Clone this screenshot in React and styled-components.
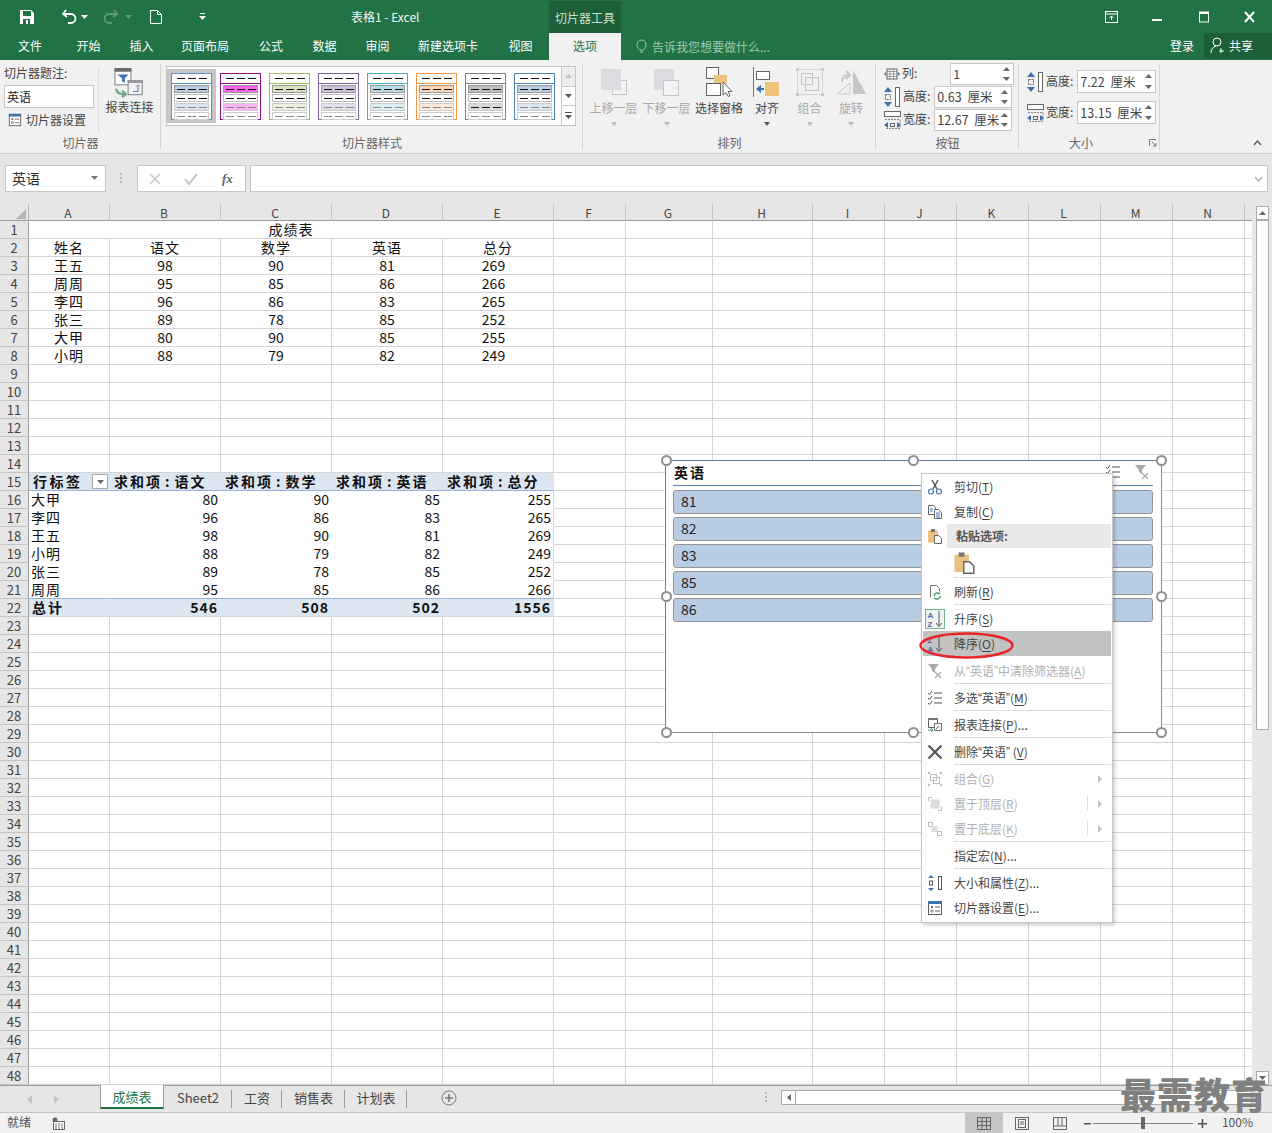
import React from "react";
import styled, { createGlobalStyle } from "styled-components";

const GlobalStyle = createGlobalStyle`
  html, body { margin: 0; padding: 0; background: #fff; }
  * { box-sizing: border-box; }
  body { font-family: "Noto Sans CJK SC", "Liberation Sans", sans-serif; font-size: 12px; color: #444; }
`;

const Page = styled.div`
  position: relative;
  width: 1272px;
  height: 1133px;
  overflow: hidden;
  display: flex;
  flex-direction: column;
  background: #e6e6e6;
`;

/* title + tabs */
const TitleBar = styled.div`
  height: 33px;
  background: #217346;
  display: flex;
  align-items: center;
  color: #fff;
`;
const Qat = styled.div`
  width: 351px;
  height: 100%;
  position: relative;
  display: flex;
  align-items: center;
`;
const QatIcon = styled.span`
  display: inline-flex;
  justify-content: center;
  flex: 0 0 ${(p) => p.$w}px;
  margin-left: ${(p) => p.$ml || 0}px;
`;
const TitleText = styled.div`
  width: 198px;
  font-size: 12px;
  line-height: 16px;
  color: #f2f7f4;
`;
const ToolLabel = styled.div`
  width: 72px;
  height: 33px;
  margin-top: 1px;
  background: #1d5f39;
  color: #c9e0d2;
  display: flex;
  align-items: center;
  justify-content: center;
  font-size: 12px;
`;
const WinButtons = styled.div`
  margin-left: auto;
  display: flex;
  width: 185px;
  margin-right: -1px;
  justify-content: space-between;
`;
const WinButton = styled.span`
  width: 46px;
  display: inline-flex;
  justify-content: center;
`;
const TabBar = styled.div`
  height: 27px;
  background: #217346;
  display: flex;
  align-items: stretch;
  color: #fff;
`;
const Tab = styled.div`
  flex: 0 0 ${(p) => p.$w}px;
  display: flex;
  align-items: center;
  justify-content: center;
  font-size: 12px;
  padding-bottom: 2px;
  background: ${(p) => (p.$active ? "#f1f1f1" : "transparent")};
  color: ${(p) => (p.$active ? "#217346" : "#fff")};
`;
const TellMe = styled.div`
  margin-left: 15px;
  display: flex;
  align-items: center;
  gap: 5px;
  color: #9fcab2;
  font-size: 12px;
  padding-bottom: 1px;
`;
const SignIn = styled.div`
  margin-left: auto;
  width: 44px;
  display: flex;
  align-items: center;
  justify-content: center;
  padding-bottom: 2px;
`;
const Share = styled.div`
  width: 68px;
  margin: 0 0 1px;
  background: #1d5f39;
  display: flex;
  align-items: center;
  gap: 3px;
  padding: 0 0 1px 6px;
`;

/* ribbon */
const Ribbon = styled.div`
  height: 94px;
  background: #f1f1f1;
  border-bottom: 1px solid #d2d2d2;
  display: flex;
  position: relative;
`;
const Group = styled.div`
  flex: 0 0 ${(p) => p.$w}px;
  position: relative;
  display: flex;
  flex-direction: column;
  padding-top: 3px;
  &::after {
    content: "";
    position: absolute;
    right: 0;
    top: 4px;
    bottom: 4px;
    width: 1px;
    background: #d4d4d4;
  }
`;
const GroupBody = styled.div`
  flex: 1;
  display: flex;
  min-height: 0;
`;
const Caption = styled.div`
  height: 18px;
  flex: none;
  text-align: center;
  line-height: 16px;
  color: #666;
  font-size: 12px;
  padding-right: ${(p) => p.$pr || 0}px;
`;
const SliceCol = styled.div`
  width: 98px;
  padding: 2px 0 0 4px;
  display: flex;
  flex-direction: column;
`;
const SmallLabel = styled.div`
  font-size: 12px;
  line-height: 16px;
  color: #444;
  white-space: nowrap;
`;
const CaptionInput = styled.div`
  width: 90px;
  height: 23px;
  margin-top: 4px;
  background: #fff;
  border: 1px solid #c6c6c6;
  font-size: 12px;
  line-height: 21px;
  color: #222;
  padding-left: 2px;
`;
const IconLabel = styled.div`
  display: flex;
  align-items: center;
  gap: 4px;
  margin: 3px 0 0 4px;
  white-space: nowrap;
`;
const ReportButton = styled.div`
  padding: 1px 0 0 0;
  width: 62px;
  display: flex;
  flex-direction: column;
  align-items: center;
  white-space: nowrap;
  border-left: 1px solid #dcdcdc;
  height: 66px;
  margin-top: 4px;
`;
const ReportText = styled.div`
  line-height: 18px;
`;
const Gallery = styled.div`
  margin: 3px 0 0 5px;
  width: 410px;
  height: 60px;
  border: 1px solid #c6c6c6;
  background: #fff;
  display: flex;
  position: relative;
`;
const ThumbCell = styled.div`
  flex: 0 0 49px;
  height: 54px;
  margin-top: 2px;
  padding: 4px 4px;
  background: ${(p) => (p.$selected ? "#c6c6c6" : "transparent")};
`;
const Thumb = styled.div`
  width: 41px;
  height: 47px;
  border: 1px solid ${(p) => p.$c};
  background: #fff;
`;
const ThumbHead = styled.div`
  height: 10px;
  border-bottom: 1px solid ${(p) => p.$c};
  display: flex;
  align-items: center;
  justify-content: center;
`;
const ThumbRow = styled.div`
  height: 8px;
  margin: 1px 2px 0;
  border: 1px solid ${(p) => p.$b || "#bbb"};
  background: ${(p) => p.$bg || "#fff"};
  display: flex;
  align-items: center;
  justify-content: center;
`;
const Dashes = styled.div`
  width: 30px;
  height: 1px;
  background: repeating-linear-gradient(90deg, ${(p) => p.$c} 0 8px, transparent 8px 11px);
`;
const GalleryScroll = styled.div`
  position: absolute;
  right: 0;
  top: 0;
  bottom: 0;
  width: 14px;
  border-left: 1px solid #c6c6c6;
  display: flex;
  flex-direction: column;
`;
const GalleryBtn = styled.div`
  flex: 1;
  display: flex;
  align-items: center;
  justify-content: center;
  background: ${(p) => (p.$off ? "#eee" : "#fff")};
  border-bottom: ${(p) => (p.$last ? "0" : "1px solid #c6c6c6")};
`;
const ArrangeRow = styled.div`
  display: flex;
  padding-left: 4px;
`;
const ArrangeButton = styled.div`
  flex: 0 0 ${(p) => p.$w}px;
  display: flex;
  flex-direction: column;
  align-items: center;
  padding-top: 3px;
  color: ${(p) => (p.$off ? "#a9a9a9" : "#444")};
  white-space: nowrap;
`;
const ArrangeIcon = styled.div`
  height: 32px;
  display: flex;
  align-items: center;
  justify-content: center;
`;
const ArrangeText = styled.div`
  line-height: 16px;
  margin-top: 2px;
`;
const Caret = styled.div`
  margin-top: 6px;
  width: 0;
  height: 0;
  border-left: 3px solid transparent;
  border-right: 3px solid transparent;
  border-top: 4px solid ${(p) => (p.$off ? "#bdbdbd" : "#555")};
`;
const FieldStack = styled.div`
  display: flex;
  flex-direction: column;
  gap: ${(p) => p.$gap}px;
  padding: ${(p) => p.$pt}px 0 0 ${(p) => p.$pl}px;
`;
const FieldRow = styled.div`
  display: flex;
  align-items: center;
  height: ${(p) => p.$h || 22}px;
  gap: 2px;
`;
const FieldLabel = styled.span`
  color: #444;
  font-size: 12px;
  line-height: 16px;
  margin-top: -2px;
  white-space: nowrap;
`;
const Spin = styled.div`
  width: ${(p) => p.$w}px;
  height: ${(p) => p.$h || 22}px;
  margin-left: ${(p) => p.$ml || 0}px;
  border: 1px solid #c6c6c6;
  background: #fff;
  display: flex;
  align-items: center;
  padding: 0 0 1px 2px;
  color: #444;
  font-size: 12.5px;
  word-spacing: 3px;
  position: relative;
  white-space: nowrap;
`;
const SpinArrows = styled.div`
  position: absolute;
  right: 3px;
  top: 3px;
  bottom: 3px;
  display: flex;
  flex-direction: column;
  justify-content: space-between;
`;
const Launcher = styled.div`
  position: absolute;
  right: 3px;
  bottom: 3px;
`;
const Collapse = styled.div`
  position: absolute;
  left: 1253px;
  bottom: 4px;
`;

/* formula bar */
const FormulaBar = styled.div`
  height: 50px;
  padding: 11px 4px 0 5px;
  display: flex;
  background: #e6e6e6;
`;
const NameBox = styled.div`
  width: 101px;
  height: 27px;
  background: #fff;
  border: 1px solid #c6c6c6;
  display: flex;
  align-items: center;
  justify-content: space-between;
  padding: 0 7px 2px 6px;
  font-size: 14px;
  color: #333;
`;
const Dots = styled.div`
  width: 31px;
  display: flex;
  align-items: center;
  justify-content: center;
  height: 27px;
`;
const FxBox = styled.div`
  width: 109px;
  height: 27px;
  background: #fff;
  border: 1px solid #c6c6c6;
  display: flex;
  align-items: center;
  padding-left: 11px;
  gap: 23px;
  margin-right: 4px;
`;
const FxLabel = styled.span`
  font-family: "Liberation Serif", serif;
  font-style: italic;
  font-weight: 700;
  font-size: 13px;
  color: #666;
`;
const FormulaInput = styled.div`
  flex: 1;
  height: 27px;
  background: #fff;
  border: 1px solid #c6c6c6;
  display: flex;
  align-items: center;
  justify-content: flex-end;
  padding-right: 4px;
`;

/* sheet */
const SheetWrap = styled.div`
  height: 881px;
  display: flex;
  background: #fff;
`;
const Sheet = styled.div`
  width: 1252px;
  display: flex;
  flex-direction: column;
`;
const ColHeaderRow = styled.div`
  display: grid;
  grid-template-columns: 29px 81px 111px 111px 111px 111px 72px 87px 100px 72px 72px 72px 72px 72px 72px 7px;
  height: 17px;
  background: #e6e6e6;
  border-bottom: 1px solid #9b9b9b;
  flex: none;
`;
const Corner = styled.div`
  border-right: 1px solid #b5b5b5;
  position: relative;
  &::after {
    content: "";
    position: absolute;
    right: 2px;
    bottom: 2px;
    border-left: 10px solid transparent;
    border-bottom: 10px solid #b6b6b6;
  }
`;
const ColHead = styled.div`
  border-right: 1px solid #c4c4c4;
  padding-right: 2px;
  text-align: center;
  font-size: 12px;
  line-height: 17px;
  color: #444;
`;
const GridRow = styled.div`
  display: grid;
  grid-template-columns: 29px 81px 111px 111px 111px 111px 72px 87px 100px 72px 72px 72px 72px 72px 72px 7px;
  grid-template-rows: 18px;
  height: 18px;
  flex: none;
`;
const RowHead = styled.div`
  height: 18px;
  background: #e6e6e6;
  border-right: 1px solid #9b9b9b;
  border-bottom: 1px solid #c4c4c4;
  text-align: center;
  font-size: 13px;
  line-height: 18px;
  color: #444;
`;
const Cell = styled.div`
  height: 18px;
  grid-column: span ${(p) => p.$span || 1};
  border-right: 1px solid ${(p) => (p.$noRight ? "transparent" : "#d4d4d4")};
  border-bottom: 1px solid ${(p) => p.$bottom || "#d4d4d4"};
  background: ${(p) => p.$fill || "#fff"};
  text-align: ${(p) => p.$align || "center"};
  padding: ${(p) => p.$pad || "0"};
  font-size: 14px;
  line-height: 17px;
  letter-spacing: ${(p) => p.$ls || 0}px;
  font-weight: ${(p) => (p.$bold ? 700 : 400)};
  color: #111;
  white-space: nowrap;
  position: relative;
`;
const Colon = styled.span`
  margin: 0 3px;
`;
const FilterBtn = styled.div`
  position: absolute;
  right: 1px;
  top: 1px;
  width: 16px;
  height: 15px;
  background: #fff;
  border: 1px solid #aaa;
  display: flex;
  align-items: center;
  justify-content: center;
`;
const ScrollBar = styled.div`
  width: 20px;
  background: #e6e6e6;
  padding: 2px 3px 0 4px;
  display: flex;
  flex-direction: column;
`;
const ScrollBtn = styled.div`
  height: 14px;
  background: #fff;
  border: 1px solid #aaa;
  display: flex;
  align-items: center;
  justify-content: center;
  flex: none;
  margin-top: ${(p) => (p.$end ? "auto" : "0")};
`;
const ScrollThumb = styled.div`
  height: 510px;
  background: #fff;
  border: 1px solid #aaa;
  flex: none;
`;

/* tabs */
const SheetTabs = styled.div`
  height: 27px;
  border-top: 1px solid #9b9b9b;
  background: #e6e6e6;
  display: flex;
  align-items: stretch;
  position: relative;
`;
const TabNav = styled.div`
  width: 100px;
  display: flex;
  align-items: center;
  gap: 21px;
  padding-left: 27px;
  flex: none;
`;
const SheetTab = styled.div`
  flex: 0 0 ${(p) => p.$w}px;
  display: flex;
  align-items: center;
  justify-content: center;
  font-size: 13px;
  color: #444;
  margin-bottom: 4px;
  position: relative;
  ${(p) =>
    p.$active
      ? `background:#fff;color:#217346;border:1px solid #9b9b9b;border-top:0;border-bottom:2px solid #217346;margin-bottom:3px;margin-top:-1px;`
      : ""}
  ${(p) =>
    p.$sep
      ? `&::after{content:"";position:absolute;right:0;top:4px;bottom:0;width:1px;background:#9b9b9b;}`
      : ""}
`;
const AddSheet = styled.div`
  margin-left: 34px;
  display: flex;
  align-items: center;
  padding-bottom: 3px;
`;
const HScrollArea = styled.div`
  margin-left: auto;
  display: flex;
  align-items: center;
  width: 507px;
  padding-bottom: 3px;
`;
const HScrollBtn = styled.div`
  width: 15px;
  height: 15px;
  background: #fff;
  border: 1px solid #aaa;
  display: flex;
  align-items: center;
  justify-content: center;
  margin-left: 13px;
`;
const HScrollTrack = styled.div`
  flex: 1;
  height: 15px;
  background: #fff;
  border: 1px solid #aaa;
  border-left: 0;
  margin-right: 20px;
`;

/* status */
const StatusBar = styled.div`
  height: 21px;
  background: #f1f1f1;
  border-top: 1px solid #c6c6c6;
  display: flex;
  align-items: center;
  padding-left: 7px;
  color: #555;
  font-size: 12px;
`;
const StatusText = styled.span`
  line-height: 16px;
  margin: -3px ${(p) => p.$mr || 0}px 0 ${(p) => p.$ml || 0}px;
`;
const ViewBtn = styled.div`
  width: 38px;
  height: 20px;
  display: flex;
  align-items: center;
  justify-content: center;
  background: ${(p) => (p.$active ? "#c6c6c6" : "transparent")};
`;
const StatusRight = styled.div`
  margin-left: auto;
  display: flex;
  align-items: center;
  height: 100%;
  padding-right: 19px;
`;
const ZoomOut = styled.span`
  display: inline-flex;
  margin-left: 5px;
`;
const Slider = styled.div`
  width: 100px;
  height: 1px;
  background: #888;
  margin: 0 5px 0 2px;
  position: relative;
`;
const SliderThumb = styled.div`
  position: absolute;
  left: 48px;
  top: -6px;
  width: 4px;
  height: 12px;
  background: #666;
`;

/* slicer overlay */
const Slicer = styled.div`
  position: absolute;
  left: 665px;
  top: 460px;
  width: 497px;
  height: 273px;
  background: #fff;
  border: 1px solid #8d8d8d;
  border-top-color: #5f7fa6;
  border-left-color: #5f7fa6;
  padding: 0 8px 0 7px;
`;
const SlicerTitle = styled.div`
  height: 25px;
  border-bottom: 1px solid #5f86b3;
  font-size: 14px;
  font-weight: 700;
  line-height: 22px;
  letter-spacing: 2px;
  padding-left: 1px;
  color: #111;
  margin-bottom: 4px;
`;
const SlicerTools = styled.div`
  position: absolute;
  right: 11px;
  top: 3px;
  display: flex;
  gap: 13px;
`;
const SlicerItem = styled.div`
  height: 24px;
  margin-bottom: 3px;
  background: #b8cce4;
  border: 1px solid #959595;
  border-radius: 3px;
  padding-left: 7px;
  font-size: 14px;
  line-height: 21px;
  color: #222;
`;
const Handle = styled.div`
  position: absolute;
  left: ${(p) => p.$x - 5}px;
  top: ${(p) => p.$y - 5}px;
  width: 11px;
  height: 11px;
  border-radius: 50%;
  background: #fff;
  border: 2px solid #8f8f8f;
`;

/* context menu */
const Menu = styled.div`
  position: absolute;
  left: 921px;
  top: 473px;
  width: 192px;
  height: 450px;
  background: #fff;
  border: 1px solid #c6c6c6;
  box-shadow: 2px 2px 4px rgba(0, 0, 0, 0.2);
  padding: 0 1px;
`;
const MenuItem = styled.div`
  height: 25px;
  display: flex;
  align-items: center;
  background: ${(p) => (p.$active ? "#c2c2c2" : "transparent")};
  color: ${(p) => (p.$off ? "#b1b1b1" : "#444")};
  font-size: 12px;
  white-space: nowrap;
  position: relative;
  u { text-underline-offset: 2px; }
`;
const MenuIcon = styled.span`
  flex: 0 0 24px;
  display: inline-flex;
  justify-content: center;
  align-items: center;
  margin-right: ${(p) => (p.$flush ? 0 : 7)}px;
`;
const Quote = styled.span`
  font-family: "Liberation Sans", sans-serif;
`;
const MenuDivider = styled.div`
  height: 2px;
  margin-left: 31px;
  border-top: ${(p) => (p.$blank ? "0" : "1px solid #dcdcdc")};
`;
const MenuHeadBar = styled.div`
  flex: 1;
  height: 24px;
  background: #e9e9e9;
  font-weight: 700;
  line-height: 23px;
  padding-left: 9px;
  color: #555;
`;
const MenuHead = styled.div`
  height: 24px;
  display: flex;
  align-items: center;
  font-size: 12px;
`;
const PasteRow = styled.div`
  height: 29px;
  padding-left: 30px;
  display: flex;
  align-items: center;
`;
const SubArrow = styled.span`
  position: absolute;
  right: 9px;
  width: 0;
  height: 0;
  border-top: 4px solid transparent;
  border-bottom: 4px solid transparent;
  border-left: 4px solid #c2c2c2;
`;
const SubSep = styled.span`
  position: absolute;
  right: 23px;
  top: 5px;
  bottom: 6px;
  width: 1px;
  background: #dedede;
`;
const RedRing = styled.svg`
  position: absolute;
  left: 918px;
  top: 632px;
  pointer-events: none;
`;
const Watermark = styled.div`
  position: absolute;
  left: 1120px;
  top: 1075px;
  font-size: 36px;
  font-weight: 900;
  line-height: 37px;
  color: #808080;
  white-space: nowrap;
  letter-spacing: 1px;
`;

const Ico = ({ w = 16, h = 16, children, vb }) => (
  <svg width={w} height={h} viewBox={vb || `0 0 ${w} ${h}`} fill="none">
    {children}
  </svg>
);

const UpTri = ({ c = "#666" }) => <Ico w={7} h={4}><path d="M3.5 0L7 4H0z" fill={c} /></Ico>;
const DownTri = ({ c = "#666" }) => <Ico w={7} h={4}><path d="M0 0h7L3.5 4z" fill={c} /></Ico>;

const SliceSettings = ({ size = 16 }) => (
  <Ico w={size} h={size} vb="0 0 16 16">
    <rect x="1.5" y="1.5" width="13" height="13" fill="#fff" stroke="#5a5a5a" />
    <rect x="1" y="1" width="14" height="3" fill="#3f73ad" />
    <rect x="4" y="6" width="2" height="2" fill="#666" />
    <rect x="4" y="10" width="2" height="2" stroke="#666" strokeWidth=".7" />
    <path d="M8 7h5M8 11h5" stroke="#666" />
  </Ico>
);

const ResizeV = () => (
  <Ico w={17} h={22}>
    <path d="M4 1L0 6h8zM4 21l-4-5h8z" fill="#3f73ad" />
    <rect x="1.5" y="8.5" width="5" height="5" stroke="#666" strokeDasharray="2 1" />
    <rect x="11.5" y="1.5" width="4" height="19" stroke="#666" fill="#fff" />
  </Ico>
);
const ResizeH = () => (
  <Ico w={17} h={20}>
    <rect x=".5" y="1.5" width="16" height="5" fill="#fff" stroke="#666" />
    <path d="M1 9.5h15v9H1" stroke="#888" strokeDasharray="2 1" />
    <path d="M0 15l4-3v6zM17 15l-4-3v6z" fill="#3f73ad" />
    <rect x="6.5" y="13.5" width="4" height="3" stroke="#666" />
  </Ico>
);
const TableIcon = () => (
  <Ico w={16} h={12}>
    <path d="M0 6l2-2v4zM16 6l-2-2v4z" fill="#3f73ad" />
    <rect x="3" y="1" width="10" height="10" fill="#fff" stroke="#666" />
    <path d="M3 3.5h10M3 6h10M3 8.5h10M6 1v10M9.500 1v10" stroke="#777" strokeWidth=".7" />
  </Ico>
);

const themes = [
  ["#5b8fc9", "#b8cce4", "#dbe3ee"],
  ["#8b0f8b", "#ff66f0", "#ffb3f5"],
  ["#9bbb59", "#d8e4bc", "#ebf1de"],
  ["#8064a2", "#ccc0da", "#e4dfec"],
  ["#4bacc6", "#b7dee8", "#daeef3"],
  ["#f79646", "#fcd5b4", "#fde9d9"],
  ["#7f7f7f", "#bfbfbf", "#d9d9d9", "#111"],
  ["#4f81bd", "#b8cce4", "#dce6f1"],
];

function StyleThumb({ theme, selected }) {
  const [c, on, dim, dimDash] = theme;
  return (
    <ThumbCell $selected={selected}>
      <Thumb $c={c}>
        <ThumbHead $c={c}><Dashes $c="#111" /></ThumbHead>
        <ThumbRow $bg={on} $b="#999"><Dashes $c="#111" /></ThumbRow>
        <ThumbRow><Dashes $c="#111" /></ThumbRow>
        <ThumbRow $bg={dim} $b="#ccc"><Dashes $c={dimDash || "#888"} /></ThumbRow>
        <ThumbRow $b="#ccc"><Dashes $c="#888" /></ThumbRow>
      </Thumb>
    </ThumbCell>
  );
}

function SpinBox({ w, h, ml, children }) {
  return (
    <Spin $w={w} $h={h} $ml={ml}>
      {children}
      <SpinArrows><UpTri /><DownTri /></SpinArrows>
    </Spin>
  );
}

const tabs = [
  ["文件", 60], ["开始", 57], ["插入", 49], ["页面布局", 78], ["公式", 54],
  ["数据", 53], ["审阅", 53], ["新建选项卡", 88], ["视图", 57],
];

const colNames = "ABCDEFGHIJKLMN".split("");

const scores = [
  ["姓名", "语文", "数学", "英语", "总分"],
  ["王五", "98", "90", "81", "269"],
  ["周周", "95", "85", "86", "266"],
  ["李四", "96", "86", "83", "265"],
  ["张三", "89", "78", "85", "252"],
  ["大甲", "80", "90", "85", "255"],
  ["小明", "88", "79", "82", "249"],
];
const pivot = [
  ["大甲", "80", "90", "85", "255"],
  ["李四", "96", "86", "83", "265"],
  ["王五", "98", "90", "81", "269"],
  ["小明", "88", "79", "82", "249"],
  ["张三", "89", "78", "85", "252"],
  ["周周", "95", "85", "86", "266"],
];

const PIVOT_FILL = "#dce6f1";
const PIVOT_LINE = "#95b3d7";

function restCells(from) {
  const out = [];
  for (let i = from; i < 15; i++) out.push(<Cell key={i} $noRight={i === 14} />);
  return out;
}

function renderCells(n) {
  if (n === 1) {
    return [<Cell key="t" $span={5} $ls={1}>成绩表</Cell>, ...restCells(5)];
  }
  if (n >= 2 && n <= 8) {
    const row = scores[n - 2];
    return [
      ...row.map((v, i) => (
        <Cell
          key={i}
          $ls={i === 0 || n === 2 ? 1 : 0}
          $pad={i === 4 && n > 2 ? "0 9px 0 0" : "0"}
        >
          {v}
        </Cell>
      )),
      ...restCells(5),
    ];
  }
  if (n === 15) {
    return [
      <Cell key="a" $fill={PIVOT_FILL} $bottom={PIVOT_LINE} $bold $ls={2.5} $align="left" $pad="0 0 0 4px" $noRight>
        行标签
        <FilterBtn><DownTri /></FilterBtn>
      </Cell>,
      ...["语文", "数学", "英语", "总分"].map((s) => (
        <Cell key={s} $fill={PIVOT_FILL} $bottom={PIVOT_LINE} $bold $ls={2} $align="left" $pad="0 0 0 4px" $noRight>
          求和项<Colon>:</Colon>{s}
        </Cell>
      )),
      ...restCells(5),
    ];
  }
  if (n >= 16 && n <= 21) {
    const row = pivot[n - 16];
    return [
      ...row.map((v, i) => (
        <Cell
          key={i}
          $noRight={i < 4}
          $align={i === 0 ? "left" : "right"}
          $pad={i === 0 ? "0 0 0 2px" : "0 2px 0 0"}
          $ls={i === 0 ? 1 : 0}
          $bottom={n === 21 ? PIVOT_LINE : "transparent"}
        >
          {v}
        </Cell>
      )),
      ...restCells(5),
    ];
  }
  if (n === 22) {
    return [
      ...["总计", "546", "508", "502", "1556"].map((v, i) => (
        <Cell
          key={i}
          $fill={PIVOT_FILL}
          $bold
          $noRight
          $ls={i === 0 ? 2 : 1}
          $align={i === 0 ? "left" : "right"}
          $pad={i === 0 ? "0 0 0 3px" : "0 2px 0 0"}
        >
          {v}
        </Cell>
      )),
      ...restCells(5),
    ];
  }
  return restCells(0);
}

const rowNums = Array.from({ length: 48 }, (_, i) => i + 1);

const Cut = () => (
  <Ico>
    <path d="M5 1l5 9M11 1L6 10" stroke="#555" strokeWidth="1.5" />
    <circle cx="4" cy="12.500" r="2.500" stroke="#3f73ad" strokeWidth="1.200" />
    <circle cx="12" cy="12.500" r="2.500" stroke="#3f73ad" strokeWidth="1.200" />
  </Ico>
);
const CopyIco = () => (
  <Ico>
    <path d="M1.500 1.500h5l2 2v7h-7z" fill="#fff" stroke="#666" />
    <path d="M7.500 5.500h4l3 3v6h-7z" fill="#fff" stroke="#666" />
    <path d="M3 5h3M3 7h3M9 9h4M9 11h4M9 13h4" stroke="#3f73ad" />
  </Ico>
);
const PasteIco = ({ s = 16 }) => (
  <Ico w={s} h={s} vb="0 0 16 16">
    <rect x="1" y="2.500" width="10" height="12" fill="#e9c07f" />
    <rect x="4" y="1" width="4" height="3" fill="#777" />
    <path d="M7.500 7.500h4l3 3v5h-7z" fill="#fff" stroke="#666" />
  </Ico>
);
const Refresh = () => (
  <Ico>
    <path d="M3.500 13.500v-12h6l3 3v3" stroke="#777" fill="#fff" />
    <path d="M7 12a3.500 3.500 0 016-2M13.500 12a3.500 3.500 0 01-6 2" stroke="#3f9a6c" strokeWidth="1.500" />
  </Ico>
);
const SortAsc = ({ framed }) => (
  <Ico w={20} h={20}>
    {framed && <rect x=".5" y=".5" width="19" height="19" fill="#eef5f0" stroke="#6fb28e" />}
    <text x="2.500" y="9" fontSize="8" fontWeight="700" fill="#3f73ad" fontFamily="Liberation Sans">A</text>
    <text x="2.500" y="17.500" fontSize="8" fontWeight="700" fill="#7e4fa0" fontFamily="Liberation Sans">Z</text>
    <path d="M14 2v15M11 14l3 3.500 3-3.500" stroke="#555" />
  </Ico>
);
const SortDesc = () => (
  <Ico w={20} h={20}>
    <text x="2.500" y="9" fontSize="8" fontWeight="700" fill="#7e4fa0" fontFamily="Liberation Sans">Z</text>
    <text x="2.500" y="17.500" fontSize="8" fontWeight="700" fill="#3f73ad" fontFamily="Liberation Sans">A</text>
    <path d="M14 2v15M11 14l3 3.500 3-3.500" stroke="#555" />
  </Ico>
);
const ClearFilter = () => (
  <Ico>
    <path d="M1 1h11L8 6v4L5 8V6z" fill="#a9a9a9" />
    <path d="M8 9l6 6M14 9l-6 6" stroke="#a9a9a9" strokeWidth="1.200" />
  </Ico>
);
const MultiSelect = () => (
  <Ico>
    <path d="M1 3l1.500 1.500L5 1M1 8l1.500 1.500L5 6M1 13l1.500 1.500L5 11" stroke="#555" />
    <path d="M7 3h8M7 8h8M7 13h8" stroke="#555" />
  </Ico>
);
const ReportSmall = () => (
  <Ico>
    <rect x="1.500" y="1.500" width="9" height="9" fill="#fff" stroke="#666" />
    <rect x="1" y="1" width="10" height="2" fill="#777" />
    <rect x="7.500" y="6.500" width="7" height="7" fill="#f3f3f3" stroke="#777" />
    <path d="M1 13h5M4 11l2 2-2 2" stroke="#3f9a6c" />
    <path d="M9 12l3-3" stroke="#3f73ad" />
  </Ico>
);
const Del = () => (
  <Ico>
    <path d="M1.500 1.500l13 13M14.500 1.500l-13 13" stroke="#555" strokeWidth="2.200" />
  </Ico>
);
const GroupIco = ({ c = "#bdbdbd" }) => (
  <Ico>
    <path d="M1 1h2v2H1zM13 1h2v2h-2zM1 13h2v2H1zM13 13h2v2h-2z" fill={c} />
    <rect x="3.500" y="3.500" width="6" height="6" stroke={c} />
    <rect x="6.500" y="6.500" width="6" height="6" stroke={c} />
  </Ico>
);
const Front = () => (
  <Ico>
    <path d="M1.500 5V1.500H5M11 14.500h3.500V11" stroke="#bdbdbd" />
    <rect x="3.500" y="3.500" width="9" height="9" fill="#dedcdf" />
  </Ico>
);
const Back = () => (
  <Ico>
    <rect x="1.500" y="1.500" width="4" height="4" stroke="#bdbdbd" />
    <rect x="4.500" y="5" width="6" height="6" fill="#dedcdf" />
    <rect x="10.500" y="10.500" width="4" height="4" stroke="#bdbdbd" />
  </Ico>
);
const SizeIco = () => (
  <Ico h={16}>
    <path d="M4 0L1 3h6zM4 16l-3-3h6z" fill="#3f73ad" />
    <rect x="2.500" y="6" width="3" height="4" stroke="#555" />
    <rect x="11.500" y="1.500" width="3" height="13" stroke="#555" />
  </Ico>
);

function Arrange() {
  return (
    <ArrangeRow>
      <ArrangeButton $w={53} $off>
        <ArrangeIcon>
          <Ico w={28} h={28}>
            <rect x="12.500" y="12.500" width="14" height="14" stroke="#c6c6c6" fill="#f5f3f6" />
            <rect x="1" y="1" width="20" height="21" fill="#dedbe0" />
          </Ico>
        </ArrangeIcon>
        <ArrangeText>上移一层</ArrangeText>
        <Caret $off />
      </ArrangeButton>
      <ArrangeButton $w={53} $off>
        <ArrangeIcon>
          <Ico w={28} h={28}>
            <rect x="1" y="1" width="20" height="21" fill="#dedbe0" />
            <rect x="10.500" y="12.500" width="15" height="15" stroke="#c6c6c6" fill="#f5f3f6" />
          </Ico>
        </ArrangeIcon>
        <ArrangeText>下移一层</ArrangeText>
        <Caret $off />
      </ArrangeButton>
      <ArrangeButton $w={52}>
        <ArrangeIcon>
          <Ico w={30} h={30}>
            <rect x="2.500" y=".5" width="12" height="11" fill="#fff" stroke="#666" />
            <rect x="10" y="8" width="13" height="9" fill="#edc37e" />
            <rect x="2.500" y="16.500" width="14" height="12" fill="#fff" stroke="#666" />
            <path d="M19 15v13l3-2.500 2 4 2-1-2-4h4z" fill="#fff" stroke="#666" />
          </Ico>
        </ArrangeIcon>
        <ArrangeText>选择窗格</ArrangeText>
      </ArrangeButton>
      <ArrangeButton $w={44}>
        <ArrangeIcon>
          <Ico w={28} h={30}>
            <path d="M.5 0v30" stroke="#777" />
            <rect x="3.500" y="4.500" width="13" height="8" fill="#fff" stroke="#666" />
            <rect x="12" y="15" width="14" height="14" fill="#edc37e" />
            <path d="M3 22l5-4v3h3v2H8v3z" fill="#3f73ad" />
          </Ico>
        </ArrangeIcon>
        <ArrangeText>对齐</ArrangeText>
        <Caret />
      </ArrangeButton>
      <ArrangeButton $w={41} $off>
        <ArrangeIcon>
          <Ico w={28} h={28}>
            <path d="M0 0h3v3H0zM25 0h3v3h-3zM0 25h3v3H0zM25 25h3v3h-3z" fill="#c6c6c6" />
            <path d="M2 1.500h24M2 26.500h24M1.500 2v24M26.500 2v24" stroke="#d4d4d4" />
            <rect x="5.500" y="5.500" width="11" height="11" stroke="#c6c6c6" />
            <rect x="9.500" y="9.500" width="13" height="13" stroke="#c6c6c6" />
          </Ico>
        </ArrangeIcon>
        <ArrangeText>组合</ArrangeText>
        <Caret $off />
      </ArrangeButton>
      <ArrangeButton $w={42} $off>
        <ArrangeIcon>
          <Ico w={30} h={28}>
            <path d="M17 26V2l13 24z" fill="#c6c6c6" />
            <path d="M1 26L14 15v11z" fill="#f1f1f1" stroke="#c6c6c6" />
            <path d="M6 14c0-5 3-7 7-7M10 3l4 4-4 4" stroke="#c6c6c6" strokeWidth="2" />
          </Ico>
        </ArrangeIcon>
        <ArrangeText>旋转</ArrangeText>
        <Caret $off />
      </ArrangeButton>
    </ArrangeRow>
  );
}

export default function App() {
  return (
    <Page>
      <GlobalStyle />
      <TitleBar>
        <Qat>
          <QatIcon $w={18} $ml={18}>
            <Ico w={14} h={14}>
              <path d="M0 0h11l3 3v11H0z" fill="#fff" />
              <rect x="3" y="1" width="8" height="5" fill="#217346" />
              <rect x="3" y="9" width="7" height="5" fill="#217346" />
              <rect x="6" y="10" width="2" height="4" fill="#fff" />
            </Ico>
          </QatIcon>
          <QatIcon $w={16} $ml={25}>
            <Ico w={15} h={15}>
              <path d="M4 1L1 5l4 3M1.500 5H9a4.500 4.500 0 010 9H6" stroke="#fff" strokeWidth="1.800" />
            </Ico>
          </QatIcon>
          <QatIcon $w={7} $ml={4}><DownTri c="#fff" /></QatIcon>
          <QatIcon $w={15} $ml={15}>
            <Ico w={15} h={15}>
              <path d="M11 1l3 4-4 3M13.500 5H6a4.500 4.500 0 000 9h3" stroke="#5f9b7b" strokeWidth="1.800" />
            </Ico>
          </QatIcon>
          <QatIcon $w={7} $ml={7}><DownTri c="#5f9b7b" /></QatIcon>
          <QatIcon $w={12} $ml={18}>
            <Ico w={12} h={14}>
              <path d="M.5.5h7l4 4v9H.5z" stroke="#fff" />
              <path d="M7.500.5v4h4" stroke="#fff" />
            </Ico>
          </QatIcon>
          <QatIcon $w={7} $ml={37}>
            <Ico w={7} h={7}><path d="M1 0h5v1H1zM0 3h7L3.500 7z" fill="#fff" /></Ico>
          </QatIcon>
        </Qat>
        <TitleText>表格1 - Excel</TitleText>
        <ToolLabel>切片器工具</ToolLabel>
        <WinButtons>
          <WinButton>
            <Ico w={13} h={12}>
              <rect x=".5" y=".5" width="12" height="11" stroke="#fff" />
              <path d="M1 3h11" stroke="#fff" />
              <path d="M6.500 9V5M4.500 7l2-2 2 2" stroke="#fff" />
            </Ico>
          </WinButton>
          <WinButton><Ico w={10} h={12}><path d="M0 8h10v2H0z" fill="#fff" /></Ico></WinButton>
          <WinButton>
            <Ico w={10} h={12}>
              <rect x=".5" y="1" width="9" height="10" stroke="#fff" />
              <path d="M0 1h10v2H0z" fill="#fff" />
            </Ico>
          </WinButton>
          <WinButton>
            <Ico w={11} h={12}><path d="M1 1l9 10M10 1L1 11" stroke="#fff" strokeWidth="2" /></Ico>
          </WinButton>
        </WinButtons>
      </TitleBar>

      <TabBar>
        {tabs.map(([t, w]) => (
          <Tab key={t} $w={w}>{t}</Tab>
        ))}
        <Tab $w={72} $active>选项</Tab>
        <TellMe>
          <Ico w={11} h={15}>
            <path d="M3.500 11C2 9 1 8 1 5.500a4.500 4.500 0 019 0C10 8 9 9 7.500 11zM4 13h3" stroke="#9fcab2" />
          </Ico>
          告诉我您想要做什么...
        </TellMe>
        <SignIn>登录</SignIn>
        <Share>
          <Ico w={16} h={17}>
            <circle cx="7" cy="5" r="4" stroke="#fff" />
            <path d="M1 16c0-4 2-6 5-7M11 11v5M9 14h5" stroke="#fff" />
          </Ico>
          共享
        </Share>
      </TabBar>

      <Ribbon>
        <Group $w={161}>
          <GroupBody>
            <SliceCol>
              <SmallLabel>切片器题注:</SmallLabel>
              <CaptionInput>英语</CaptionInput>
              <IconLabel><SliceSettings size={14} />切片器设置</IconLabel>
            </SliceCol>
            <ReportButton>
              <Ico w={31} h={30} vb="0 0 32 32">
                <rect x=".5" y="1" width="17" height="17" fill="#fff" stroke="#777" />
                <rect x="0" y="0" width="18" height="4" fill="#6b6b6b" />
                <path d="M3 7h12l-4 4v5l-3-2v-3z" fill="#3f73ad" />
                <rect x="14.500" y="13.500" width="15" height="15" fill="#f2f2f2" stroke="#777" />
                <rect x="14" y="13" width="16" height="3" fill="#999" />
                <path d="M2 22c0 5 5 6 9 6M8 24l4 4-4 3" stroke="#6fa98d" strokeWidth="2.500" />
                <path d="M20 25h5v-5M23 20l2-2 2 2" stroke="#3f73ad" />
              </Ico>
              <ReportText>报表连接</ReportText>
            </ReportButton>
          </GroupBody>
          <Caption>切片器</Caption>
        </Group>
        <Group $w={422}>
          <GroupBody>
            <Gallery>
              {themes.map((t, i) => (
                <StyleThumb key={i} theme={t} selected={i === 0} />
              ))}
              <GalleryScroll>
                <GalleryBtn $off><UpTri c="#c0c0c0" /></GalleryBtn>
                <GalleryBtn><DownTri c="#555" /></GalleryBtn>
                <GalleryBtn $last>
                  <Ico w={7} h={7}><path d="M0 0h7v1H0zM0 3h7L3.500 7z" fill="#555" /></Ico>
                </GalleryBtn>
              </GalleryScroll>
            </Gallery>
          </GroupBody>
          <Caption>切片器样式</Caption>
        </Group>
        <Group $w={293}>
          <GroupBody><Arrange /></GroupBody>
          <Caption>排列</Caption>
        </Group>
        <Group $w={143}>
          <GroupBody>
            <FieldStack $gap={1} $pt={0} $pl={8}>
              <FieldRow $h={22}>
                <TableIcon />
                <FieldLabel>列:</FieldLabel>
                <SpinBox w={64} ml={31}>1</SpinBox>
              </FieldRow>
              <FieldRow $h={22}>
                <ResizeV />
                <FieldLabel>高度:</FieldLabel>
                <SpinBox w={78} ml={2}>0.63 厘米</SpinBox>
              </FieldRow>
              <FieldRow $h={22}>
                <ResizeH />
                <FieldLabel>宽度:</FieldLabel>
                <SpinBox w={78} ml={2}>12.67 厘米</SpinBox>
              </FieldRow>
            </FieldStack>
          </GroupBody>
          <Caption>按钮</Caption>
        </Group>
        <Group $w={141}>
          <GroupBody>
            <FieldStack $gap={8} $pt={7} $pl={8}>
              <FieldRow $h={23}>
                <ResizeV />
                <FieldLabel>高度:</FieldLabel>
                <SpinBox w={79} h={23} ml={2}>7.22 厘米</SpinBox>
              </FieldRow>
              <FieldRow $h={23}>
                <ResizeH />
                <FieldLabel>宽度:</FieldLabel>
                <SpinBox w={79} h={23} ml={2}>13.15 厘米</SpinBox>
              </FieldRow>
            </FieldStack>
          </GroupBody>
          <Caption $pr={17}>大小</Caption>
          <Launcher>
            <Ico w={8} h={8}>
              <path d="M.5 7V.5H7" stroke="#777" />
              <path d="M3 3l4 4M7 4v3H4" stroke="#777" />
            </Ico>
          </Launcher>
        </Group>
        <Collapse>
          <Ico w={9} h={6}><path d="M1 5l3.500-4L8 5" stroke="#555" strokeWidth="1.300" /></Ico>
        </Collapse>
      </Ribbon>

      <FormulaBar>
        <NameBox>英语<DownTri c="#777" /></NameBox>
        <Dots>
          <Ico w={3} h={11}><path d="M0 0h2v2H0zM0 4h2v2H0zM0 8h2v2H0z" fill="#b5b5b5" /></Ico>
        </Dots>
        <FxBox>
          <Ico w={12} h={12}><path d="M1 1l10 10M11 1L1 11" stroke="#c4c4c4" strokeWidth="1.500" /></Ico>
          <Ico w={15} h={12}><path d="M1 6l4 5 8-10" stroke="#c4c4c4" strokeWidth="2" /></Ico>
          <FxLabel>fx</FxLabel>
        </FxBox>
        <FormulaInput>
          <Ico w={9} h={6}><path d="M1 1l3.500 4L8 1" stroke="#aaa" strokeWidth="1.300" /></Ico>
        </FormulaInput>
      </FormulaBar>

      <SheetWrap>
        <Sheet>
          <ColHeaderRow>
            <Corner />
            {colNames.map((c) => (
              <ColHead key={c}>{c}</ColHead>
            ))}
          </ColHeaderRow>
          {rowNums.map((n) => (
            <GridRow key={n}>
              <RowHead>{n}</RowHead>
              {renderCells(n)}
            </GridRow>
          ))}
        </Sheet>
        <ScrollBar>
          <ScrollBtn><UpTri c="#666" /></ScrollBtn>
          <ScrollThumb />
          <ScrollBtn $end><DownTri c="#666" /></ScrollBtn>
        </ScrollBar>
      </SheetWrap>

      <SheetTabs>
        <TabNav>
          <Ico w={6} h={9}><path d="M5 0v9L0 4.500z" fill="#c4c4c4" /></Ico>
          <Ico w={6} h={9}><path d="M0 0v9l5-4.500z" fill="#c4c4c4" /></Ico>
        </TabNav>
        <SheetTab $w={64} $active>成绩表</SheetTab>
        <SheetTab $w={68} $sep>Sheet2</SheetTab>
        <SheetTab $w={50} $sep>工资</SheetTab>
        <SheetTab $w={63} $sep>销售表</SheetTab>
        <SheetTab $w={62} $sep>计划表</SheetTab>
        <AddSheet>
          <Ico><circle cx="8" cy="8" r="7" stroke="#777" /><path d="M4 8h8M8 4v8" stroke="#777" strokeWidth="1.500" /></Ico>
        </AddSheet>
        <HScrollArea>
          <Ico w={3} h={11}><path d="M0 0h2v2H0zM0 4h2v2H0zM0 8h2v2H0z" fill="#b5b5b5" /></Ico>
          <HScrollBtn><Ico w={4} h={7}><path d="M4 0v7L0 3.500z" fill="#666" /></Ico></HScrollBtn>
          <HScrollTrack />
        </HScrollArea>
      </SheetTabs>

      <StatusBar>
        <StatusText $mr={21}>就绪</StatusText>
        <Ico w={14} h={13}>
          <circle cx="3" cy="3" r="2.500" fill="#666" />
          <rect x="1.500" y="4.500" width="11" height="8" fill="#fff" stroke="#666" />
          <path d="M3 7h8M3 9h8M3 11h8" stroke="#777" strokeDasharray="2 1" />
        </Ico>
        <StatusRight>
          <ViewBtn $active>
            <Ico w={14} h={13}><rect x=".5" y=".5" width="13" height="12" stroke="#666" /><path d="M5 1v11M9.500 1v11M1 4.500h12M1 8.500h12" stroke="#666" /></Ico>
          </ViewBtn>
          <ViewBtn>
            <Ico w={14} h={13}><rect x=".5" y=".5" width="13" height="12" stroke="#666" /><rect x="3.500" y="2.500" width="7" height="8" stroke="#666" /><path d="M5 5h4M5 7h4" stroke="#666" /></Ico>
          </ViewBtn>
          <ViewBtn>
            <Ico w={14} h={13}><path d="M.5 12.500V.5h13v12zM.5 9h13M5 1v8M9 1v8" stroke="#666" /></Ico>
          </ViewBtn>
          <ZoomOut><Ico w={7} h={7}><path d="M0 3h7v1.500H0z" fill="#555" /></Ico></ZoomOut>
          <Slider><SliderThumb /></Slider>
          <Ico w={9} h={9}><path d="M0 4h9v1.500H0zM3.700 0h1.500v9H3.700z" fill="#555" /></Ico>
          <StatusText $ml={15}>100%</StatusText>
        </StatusRight>
      </StatusBar>

      <Slicer>
        <SlicerTitle>英语</SlicerTitle>
        <SlicerTools>
          <MultiSelect />
          <ClearFilter />
        </SlicerTools>
        {["81", "82", "83", "85", "86"].map((v) => (
          <SlicerItem key={v}>{v}</SlicerItem>
        ))}
      </Slicer>
      {[
        [666, 460], [913, 460], [1161, 460], [666, 596],
        [1161, 596], [666, 732], [913, 732], [1161, 732],
      ].map(([x, y]) => (
        <Handle key={`${x}-${y}`} $x={x} $y={y} />
      ))}

      <Menu>
        <MenuItem><MenuIcon><Cut /></MenuIcon>剪切(<u>T</u>)</MenuItem>
        <MenuItem><MenuIcon><CopyIco /></MenuIcon>复制(<u>C</u>)</MenuItem>
        <MenuHead><MenuIcon $flush><PasteIco /></MenuIcon><MenuHeadBar>粘贴选项:</MenuHeadBar></MenuHead>
        <PasteRow><PasteIco s={23} /></PasteRow>
        <MenuDivider />
        <MenuItem><MenuIcon><Refresh /></MenuIcon>刷新(<u>R</u>)</MenuItem>
        <MenuDivider />
        <MenuItem><MenuIcon><SortAsc framed /></MenuIcon>升序(<u>S</u>)</MenuItem>
        <MenuItem $active><MenuIcon><SortDesc /></MenuIcon>降序(<u>O</u>)</MenuItem>
        <MenuDivider $blank />
        <MenuItem $off><MenuIcon><ClearFilter /></MenuIcon>从<Quote>“</Quote>英语<Quote>”</Quote>中清除筛选器(<u>A</u>)</MenuItem>
        <MenuDivider />
        <MenuItem><MenuIcon><MultiSelect /></MenuIcon>多选<Quote>“</Quote>英语<Quote>”</Quote>(<u>M</u>)</MenuItem>
        <MenuDivider />
        <MenuItem><MenuIcon><ReportSmall /></MenuIcon>报表连接(<u>P</u>)...</MenuItem>
        <MenuDivider />
        <MenuItem><MenuIcon><Del /></MenuIcon>删除<Quote>“</Quote>英语<Quote>”</Quote>&nbsp;(<u>V</u>)</MenuItem>
        <MenuDivider />
        <MenuItem $off><MenuIcon><GroupIco /></MenuIcon>组合(<u>G</u>)<SubArrow /></MenuItem>
        <MenuItem $off><MenuIcon><Front /></MenuIcon>置于顶层(<u>R</u>)<SubSep /><SubArrow /></MenuItem>
        <MenuItem $off><MenuIcon><Back /></MenuIcon>置于底层(<u>K</u>)<SubSep /><SubArrow /></MenuItem>
        <MenuDivider />
        <MenuItem><MenuIcon />指定宏(<u>N</u>)...</MenuItem>
        <MenuDivider />
        <MenuItem><MenuIcon><SizeIco /></MenuIcon>大小和属性(<u>Z</u>)...</MenuItem>
        <MenuItem><MenuIcon><SliceSettings /></MenuIcon>切片器设置(<u>E</u>)...</MenuItem>
      </Menu>
      <RedRing width="98" height="28" viewBox="0 0 98 28">
        <ellipse cx="48.500" cy="13.500" rx="46" ry="12" fill="none" stroke="#e8232a" strokeWidth="2.500" />
      </RedRing>

      <Watermark>最需教育</Watermark>
    </Page>
  );
}
